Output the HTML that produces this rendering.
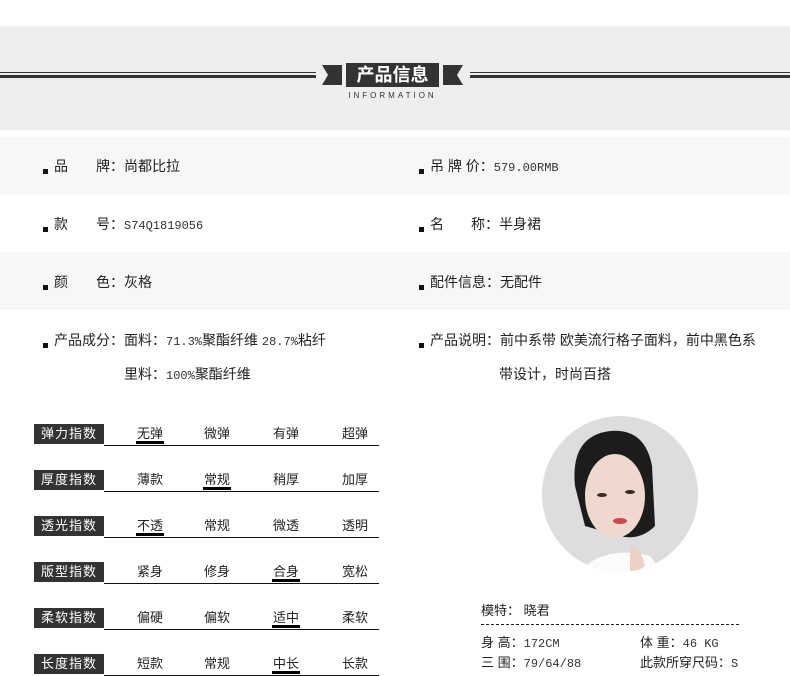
<!DOCTYPE html>
<html><head><meta charset="utf-8"><style>
body{margin:0;width:790px;height:676px;background:#fff;position:relative;overflow:hidden;font-family:"Liberation Sans","Noto Sans CJK SC",sans-serif;color:#222}
.a{position:absolute;white-space:nowrap}
.t{font-size:14px}
.m{font-family:"Liberation Mono","Noto Sans CJK SC",monospace;font-size:12px;color:#333}
.dot{position:absolute;width:5px;height:5px;background:#111}
.lab{position:absolute;left:34px;width:70px;height:20px;background:#333;color:#fff;font-size:13px;line-height:20px;text-align:center;letter-spacing:1px}
.ln{position:absolute;left:104px;width:275px;height:1px;background:#111}
.opt{position:absolute;font-size:13px;width:40px;text-align:center;margin-left:-20px}
.bar{position:absolute;width:28px;height:3px;background:#000;margin-left:-14px}
</style></head><body>
<div class="a" style="left:0;top:26px;width:790px;height:104px;background:#eeeeee"></div>
<div class="a" style="left:0;top:72px;width:316px;height:1px;background:#333"></div>
<div class="a" style="left:0;top:75px;width:316px;height:3px;background:#333"></div>
<div class="a" style="left:470px;top:72px;width:320px;height:1px;background:#333"></div>
<div class="a" style="left:470px;top:75px;width:320px;height:3px;background:#333"></div>
<svg class="a" style="left:320px;top:63px" width="145" height="24"><polygon points="2,2 22,2 22,22 2,22 8,12" fill="#333"/><polygon points="143,2 123,2 123,22 143,22 137,12" fill="#333"/><rect x="26" y="0" width="93" height="24" fill="#333"/></svg>
<div class="a" style="left:346px;top:63px;width:93px;text-align:center;color:#fff;font-size:18px;font-weight:bold;line-height:24px">产品信息</div>
<div class="a" style="left:340px;top:91px;width:105px;text-align:center;font-size:8px;letter-spacing:3px;color:#333">INFORMATION</div>

<div class="a" style="left:0;top:137px;width:790px;height:58px;background:#f7f7f7"></div>
<div class="a" style="left:0;top:252px;width:790px;height:58px;background:#f7f7f7"></div>

<div class="dot" style="left:43px;top:169px"></div><div class="a t" style="left:54px;top:156px">品</div><div class="a t" style="left:96px;top:156px">牌：尚都比拉</div>
<div class="dot" style="left:419px;top:169px"></div><div class="a t" style="left:430px;top:156px">吊 牌 价：<span class="m">579.00RMB</span></div>
<div class="dot" style="left:43px;top:227px"></div><div class="a t" style="left:54px;top:214px">款</div><div class="a t" style="left:96px;top:214px">号：<span class="m">S74Q1819056</span></div>
<div class="dot" style="left:419px;top:227px"></div><div class="a t" style="left:430px;top:214px">名</div><div class="a t" style="left:471px;top:214px">称：半身裙</div>
<div class="dot" style="left:43px;top:285px"></div><div class="a t" style="left:54px;top:272px">颜</div><div class="a t" style="left:96px;top:272px">色：灰格</div>
<div class="dot" style="left:419px;top:285px"></div><div class="a t" style="left:430px;top:272px">配件信息：无配件</div>
<div class="dot" style="left:43px;top:343px"></div><div class="a t" style="left:54px;top:330px">产品成分：面料：<span class="m">71.3%</span>聚酯纤维 <span class="m">28.7%</span>粘纤</div>
<div class="a t" style="left:124px;top:364px">里料：<span class="m">100%</span>聚酯纤维</div>
<div class="dot" style="left:419px;top:343px"></div><div class="a t" style="left:430px;top:330px">产品说明：前中系带 欧美流行格子面料，前中黑色系</div>
<div class="a t" style="left:499px;top:364px">带设计，时尚百搭</div>

<div class="lab" style="top:424px">弹力指数</div><div class="ln" style="top:445px"></div>
<div class="opt" style="left:150px;top:423px">无弹</div><div class="opt" style="left:217px;top:423px">微弹</div><div class="opt" style="left:286px;top:423px">有弹</div><div class="opt" style="left:355px;top:423px">超弹</div><div class="bar" style="left:150px;top:441px"></div>
<div class="lab" style="top:470px">厚度指数</div><div class="ln" style="top:491px"></div>
<div class="opt" style="left:150px;top:469px">薄款</div><div class="opt" style="left:217px;top:469px">常规</div><div class="opt" style="left:286px;top:469px">稍厚</div><div class="opt" style="left:355px;top:469px">加厚</div><div class="bar" style="left:217px;top:487px"></div>
<div class="lab" style="top:516px">透光指数</div><div class="ln" style="top:537px"></div>
<div class="opt" style="left:150px;top:515px">不透</div><div class="opt" style="left:217px;top:515px">常规</div><div class="opt" style="left:286px;top:515px">微透</div><div class="opt" style="left:355px;top:515px">透明</div><div class="bar" style="left:150px;top:533px"></div>
<div class="lab" style="top:562px">版型指数</div><div class="ln" style="top:583px"></div>
<div class="opt" style="left:150px;top:561px">紧身</div><div class="opt" style="left:217px;top:561px">修身</div><div class="opt" style="left:286px;top:561px">合身</div><div class="opt" style="left:355px;top:561px">宽松</div><div class="bar" style="left:286px;top:579px"></div>
<div class="lab" style="top:608px">柔软指数</div><div class="ln" style="top:629px"></div>
<div class="opt" style="left:150px;top:607px">偏硬</div><div class="opt" style="left:217px;top:607px">偏软</div><div class="opt" style="left:286px;top:607px">适中</div><div class="opt" style="left:355px;top:607px">柔软</div><div class="bar" style="left:286px;top:625px"></div>
<div class="lab" style="top:654px">长度指数</div><div class="ln" style="top:675px"></div>
<div class="opt" style="left:150px;top:653px">短款</div><div class="opt" style="left:217px;top:653px">常规</div><div class="opt" style="left:286px;top:653px">中长</div><div class="opt" style="left:355px;top:653px">长款</div><div class="bar" style="left:286px;top:671px"></div>

<svg class="a" style="left:540px;top:416px" width="160" height="160" viewBox="0 0 160 160">
<defs><clipPath id="c"><circle cx="80" cy="78" r="78"/></clipPath></defs>
<g clip-path="url(#c)">
<rect width="160" height="160" fill="#dcdddf"/>
<path d="M35 70 Q30 20 70 15 Q105 12 112 50 L115 110 Q100 125 80 120 L45 110 Z" fill="#1c1c1c"/>
<ellipse cx="75" cy="80" rx="30" ry="42" fill="#efd9cf"/>
<path d="M45 150 Q70 130 110 140 L125 160 L40 160 Z" fill="#fbfbfb"/>
<path d="M90 132 Q100 128 105 150 L90 160 Z" fill="#ecd2c6"/>
<ellipse cx="62" cy="79" rx="5" ry="2" fill="#3a2a25"/><ellipse cx="90" cy="76" rx="5" ry="2" fill="#3a2a25"/>
<ellipse cx="80" cy="105" rx="7" ry="3" fill="#d04450"/>
</g></svg>

<div class="a t" style="left:481px;top:600px;font-size:13px">模特： 晓君</div>
<div class="a" style="left:481px;top:624px;width:258px;border-top:1px dashed #222"></div>
<div class="a" style="left:481px;top:632px;font-size:13px">身 高：<span class="m">172CM</span></div>
<div class="a" style="left:640px;top:632px;font-size:13px">体 重：<span class="m">46 KG</span></div>
<div class="a" style="left:481px;top:652px;font-size:13px">三 围：<span class="m">79/64/88</span></div>
<div class="a" style="left:640px;top:652px;font-size:13px">此款所穿尺码：<span class="m">S</span></div>
</body></html>
